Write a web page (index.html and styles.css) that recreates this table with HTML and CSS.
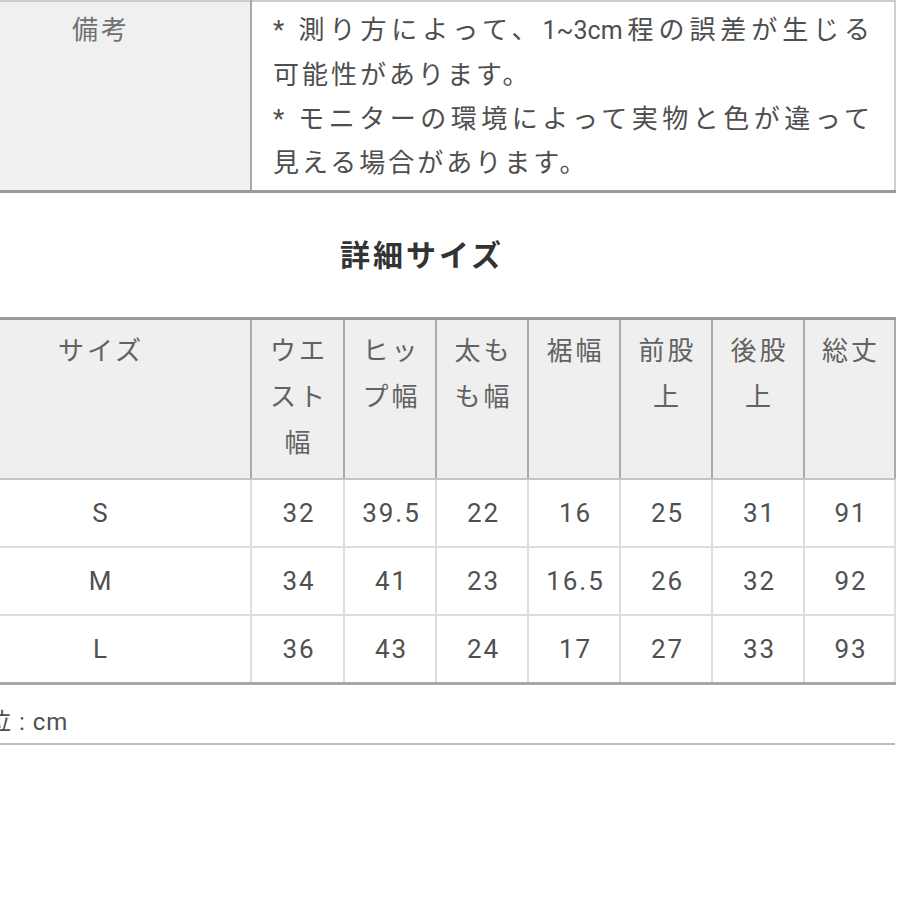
FILE: index.html
```html
<!DOCTYPE html>
<html lang="ja">
<head>
<meta charset="utf-8">
<title>詳細サイズ</title>
<link rel="stylesheet" href="styles.css">
</head>
<body>
<div class="page">
  <table class="note">
    <colgroup><col class="col-label"><col class="col-text"></colgroup>
    <tr>
      <th class="note-label">備考</th>
      <td class="note-body">
        <p class="ln just">* 測り方によって、<span class="latin">1~3cm</span>程の誤差が生じる</p>
        <p class="ln">可能性があります。</p>
        <p class="ln just">* モニターの環境によって実物と色が違って</p>
        <p class="ln">見える場合があります。</p>
      </td>
    </tr>
  </table>

  <h2 class="title">詳細サイズ</h2>

  <table class="sizes">
    <colgroup>
      <col class="col-size">
      <col class="col-w93">
      <col class="col-w92"><col class="col-w92"><col class="col-w92"><col class="col-w92"><col class="col-w92">
      <col class="col-w91">
    </colgroup>
    <thead>
      <tr>
        <th>サイズ</th>
        <th>ウエ<br>スト<br>幅</th>
        <th>ヒッ<br>プ幅</th>
        <th>太も<br>も幅</th>
        <th>裾幅</th>
        <th>前股<br>上</th>
        <th>後股<br>上</th>
        <th>総丈</th>
      </tr>
    </thead>
    <tbody>
      <tr><td>S</td><td>32</td><td>39.5</td><td>22</td><td>16</td><td>25</td><td>31</td><td>91</td></tr>
      <tr><td>M</td><td>34</td><td>41</td><td>23</td><td>16.5</td><td>26</td><td>32</td><td>92</td></tr>
      <tr><td>L</td><td>36</td><td>43</td><td>24</td><td>17</td><td>27</td><td>33</td><td>93</td></tr>
    </tbody>
  </table>

  <div class="unit">単位 : cm</div>
</div>
</body>
</html>
```

FILE: styles.css
```css
html, body {
  margin: 0;
  padding: 0;
  background: #ffffff;
}

body {
  font-family: Roboto, "Noto Sans CJK JP", sans-serif;
  color: #505050;
  overflow: hidden;
}

.page {
  margin-left: -51px;
  width: 946px;
}

/* ---------- note table ---------- */
.note {
  width: 946px;
  table-layout: fixed;
  border-collapse: collapse;
  border-top: 2px solid #cccccc;
  border-bottom: 3px solid #9a9a9a;
}

.col-label { width: 302px; }
.col-text { width: 644px; }

.note-label {
  background: #f0f0f0;
  border-right: 2px solid #a8a8a8;
  vertical-align: top;
  font-weight: normal;
  font-size: 26px;
  letter-spacing: 3px;
  line-height: 44px;
  color: #707070;
  padding: 6px 0 5px 3px;
  text-align: center;
}

.note-body {
  background: #ffffff;
  border-right: 2px solid #cfcfcf;
  vertical-align: top;
  padding: 6px 21px 5px 21px;
  font-size: 26px;
  letter-spacing: 3px;
  line-height: 44px;
  color: #4e4e4e;
}

.ln {
  margin: 0;
  white-space: nowrap;
}

.ln.just {
  text-align: justify;
  text-align-last: justify;
  white-space: normal;
}

.latin {
  font-size: 25px;
  letter-spacing: 0;
  margin-right: 3px;
}

/* ---------- heading ---------- */
.title {
  margin: 0;
  padding: 43px 0 41px;
  text-align: center;
  font-size: 30px;
  letter-spacing: 3px;
  line-height: 40px;
  font-weight: bold;
  color: #333333;
}

/* ---------- size table ---------- */
.sizes {
  width: 946px;
  table-layout: fixed;
  border-collapse: collapse;
  border-top: 3px solid #9c9c9c;
  border-bottom: 3px solid #a8a8a8;
}

.col-size { width: 302px; }
.col-w93 { width: 93px; }
.col-w92 { width: 92px; }
.col-w91 { width: 91px; }

.sizes th {
  background: #efefef;
  font-weight: normal;
  font-size: 26px;
  letter-spacing: 3px;
  line-height: 46px;
  color: #626262;
  vertical-align: top;
  text-align: center;
  padding: 8px 0 12px 3px;
  border-left: 2px solid #ababab;
  border-right: 2px solid #ababab;
  border-bottom: 2px solid #c4c4c4;
}

.sizes th:first-child { border-left: none; }

.sizes td {
  height: 66px;
  padding: 0 0 0 3px;
  text-align: center;
  vertical-align: middle;
  font-size: 26px;
  letter-spacing: 2px;
  color: #505050;
  border: 2px solid #dddddd;
}

.sizes td:first-child { border-left: none; }

/* ---------- unit caption ---------- */
.unit {
  padding: 22px 0 6px 13px;
  line-height: 30px;
  font-size: 24px;
  letter-spacing: 1px;
  color: #505050;
  border-bottom: 2px solid #bdbdbd;
}
```
